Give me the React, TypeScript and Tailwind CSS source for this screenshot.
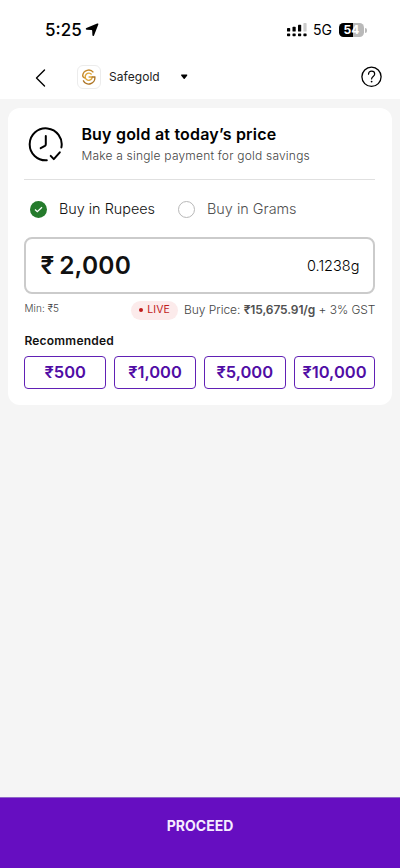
import { clsx } from "clsx";

const amounts = ["₹500", "₹1,000", "₹5,000", "₹10,000"];

function StatusBar() {
  return (
    <div className="flex h-[60px] items-center justify-between pl-[45px] pr-[33px]">
      <div className="flex items-center gap-[2px]">
        <span className="w-[38px] whitespace-nowrap text-[17px] font-medium leading-5">5:25</span>
        <svg width="14" height="14" viewBox="0 0 14 14" className="fill-black">
          <path d="M12.2.6c.8-.3 1.4.2 1.1 1L9 12.4c-.4.9-1.5.8-1.6-.2L7.2 7.9c0-.7-.3-.9-.9-.9L1.7 6.7C.6 6.6.4 5.5 1.4 5z" />
        </svg>
      </div>
      <div className="flex items-center">
        <svg width="20" height="14" viewBox="0 0 20 14" className="fill-black">
          <rect x="0" y="5" width="3.2" height="3.6" rx=".7" />
          <rect x="5.5" y="3.8" width="3.2" height="4.8" rx=".7" />
          <rect x="11" y="1.8" width="3.2" height="6.8" rx=".7" />
          <rect x="16.4" y="0" width="3.2" height="8.6" rx=".7" fill="#cbcbcb" />
          <rect x="0" y="10.4" width="3.2" height="2.9" rx=".7" />
          <rect x="5.5" y="10.4" width="3.2" height="2.9" rx=".7" />
          <rect x="11" y="10.4" width="3.2" height="2.9" rx=".7" />
          <rect x="16.4" y="10.4" width="3.2" height="2.9" rx=".7" />
        </svg>
        <span className="ml-[6px] w-[20px] whitespace-nowrap text-[14px] leading-5">5G</span>
        <div className="ml-[6px] flex h-[14px] w-[25px] items-center justify-center rounded-[4.5px] bg-linear-to-r from-black from-57% to-[#b9b9b9] to-57% text-[12px] font-bold leading-none text-white">
          54
        </div>
        <div className="ml-px h-[5px] w-[2px] rounded-r-full bg-[#b9b9b9]" />
      </div>
    </div>
  );
}

function ProviderLogo() {
  return (
    <div className="flex size-[24px] items-center justify-center rounded-[6px] border border-[#ececec] bg-white">
      <svg width="16" height="16" viewBox="0 0 16 16" fill="none" strokeWidth="1.4">
        <path d="M12.4 3.4A6 6 0 0 0 1.7 6.4c0 1.6 1.2 2.3 2.6 2.7" stroke="#c58a2c" />
        <path d="M10.6 5.5A3.6 3.6 0 1 0 10.8 9.7V8H7.6" stroke="#dda63a" />
        <path d="M2.2 11.4A6.1 6.1 0 0 0 13.8 8h-3" stroke="#ad7424" />
      </svg>
    </div>
  );
}

function Header() {
  return (
    <div className="flex h-[39px] items-start pl-[35px] pr-[18px]">
      <svg width="12" height="18" viewBox="0 0 12 18" fill="none" className="mt-[9px]">
        <path d="M9.5 1 1.5 9l8 8" stroke="black" strokeWidth="1.4" strokeLinecap="round" strokeLinejoin="round" />
      </svg>
      <div className="ml-[30px] mt-[5px] flex items-center">
        <ProviderLogo />
        <span className="ml-[8px] w-[51px] whitespace-nowrap text-[12px] leading-4 tracking-[0.05px] text-[#222]">Safegold</span>
        <svg width="8" height="6" viewBox="0 0 8 6" className="ml-[20px]">
          <path d="M1.7.6h5c.6 0 .8.7.4 1.1L4.7 4.7c-.3.3-.7.3-1 0L1.3 1.7C.9 1.3 1.1.6 1.7.6z" />
        </svg>
      </div>
      <svg width="22" height="22" viewBox="0 0 22 22" fill="none" className="ml-auto mt-[6px]">
        <circle cx="11.5" cy="10.8" r="9.6" stroke="black" strokeWidth="1.3" />
        <path d="M8.5 8.2c0-1.8 1.3-3 3.1-3s3.1 1.2 3.1 2.8c0 2.4-3.1 2.5-3.1 4.9" stroke="black" strokeWidth="1.2" strokeLinecap="round" />
        <circle cx="11.6" cy="15.6" r=".9" fill="black" />
      </svg>
    </div>
  );
}

function ClockIcon() {
  return (
    <svg width="36" height="36" viewBox="0 0 36 36" fill="none" stroke="black" strokeWidth="2" strokeLinecap="round" strokeLinejoin="round">
      <path d="M18.8 33.3A16 16 0 1 1 33.4 20.4" />
      <path d="M17.8 9v8.2c0 .8-.3 1.2-.9 1.6l-4.2 2.4" />
      <path d="m22.7 28.9 3.1 3.2 6-6.8" />
    </svg>
  );
}

function Radio({ label, checked }: { label: string; checked?: boolean }) {
  return (
    <div className="flex items-center gap-[12px]">
      {checked ? (
        <div className="flex size-[17px] items-center justify-center rounded-full bg-[#257b2c]">
          <svg width="9" height="7" viewBox="0 0 9 7" fill="none">
            <path d="m1 3.5 2.3 2.2L8 1.2" stroke="white" strokeWidth="1.3" />
          </svg>
        </div>
      ) : (
        <div className="size-[17px] rounded-full border-[1.5px] border-[#b8b8b8]" />
      )}
      <span className={clsx("whitespace-nowrap text-[14.4px] font-light leading-5", checked ? "text-[#111]" : "text-[#505050]")}>{label}</span>
    </div>
  );
}

export default function App() {
  return (
    <div className="flex h-[868px] w-[400px] flex-col overflow-hidden bg-[#f5f5f5] font-['Inter',sans-serif] text-black">
      <header className="h-[99px] bg-white">
        <StatusBar />
        <Header />
      </header>

      <main className="mx-2 mt-[9px] h-[297px] rounded-[12px] bg-white pl-[16.4px] pr-[16.6px]">
        <div className="flex h-[72px] items-start border-b border-[#e0e0e0]">
          <div className="ml-[3.6px] mt-[19px]">
            <ClockIcon />
          </div>
          <div className="ml-[17.4px] mt-[16px] whitespace-nowrap">
            <h1 className="text-[16px] font-semibold leading-5 tracking-[0.2px]">Buy gold at today’s price</h1>
            <p className="mt-[3.5px] text-[12px] font-light leading-4 tracking-[0.2px] text-[#444]">Make a single payment for gold savings</p>
          </div>
        </div>

        <div className="flex h-[57px] items-center gap-[23px] pl-[5.5px] pt-px">
          <Radio label="Buy in Rupees" checked />
          <Radio label="Buy in Grams" />
        </div>

        <div className="flex h-[57px] items-center justify-between rounded-[8px] border-2 border-[#cbcbcb] px-[14px]">
          <span className="flex gap-[5px] text-[24.5px] font-semibold text-[#111]">
            <span>₹</span>
            <span className="tracking-[0.2px]">2,000</span>
          </span>
          <span className="text-[14.5px] font-light text-black">0.1238g</span>
        </div>

        <div className="mt-[6px] flex h-[20px] items-center whitespace-nowrap text-[12px] font-light text-[#444]">
          <span className="-mt-[3px] text-[10px] tracking-[0.1px]">Min: ₹5</span>
          <span className="ml-auto flex h-[19px] w-[47px] items-center justify-center gap-[4px] rounded-full bg-[#fcebeb] text-[10.5px] font-normal tracking-[0.1px] text-[#c01c1c]">
            <i className="size-[4px] rounded-full bg-[#c01c1c]" />
            LIVE
          </span>
          <span className="ml-[6px] tracking-[-0.05px]">
            Buy Price: <b className="font-semibold tracking-[-0.1px] text-[#505050]">₹15,675.91/g</b> + 3% GST
          </span>
        </div>

        <h2 className="mt-[13px] text-[12px] font-semibold leading-4 tracking-[0.22px] text-[#111]">Recommended</h2>
        <div className="mt-[7px] grid grid-cols-4 gap-[8px]">
          {amounts.map((amount) => (
            <button key={amount} className="h-[33px] rounded-[4px] border border-[#6120b5] text-[16.5px] font-semibold text-[#500da5]">
              {amount}
            </button>
          ))}
        </div>
      </main>

      <button className="mt-auto flex h-[71px] items-start justify-center border-t border-[#9067c8] bg-[#660ec1] pt-[18px] text-[14px] font-bold leading-5 text-[#f5ecff]">
        PROCEED
      </button>
    </div>
  );
}
